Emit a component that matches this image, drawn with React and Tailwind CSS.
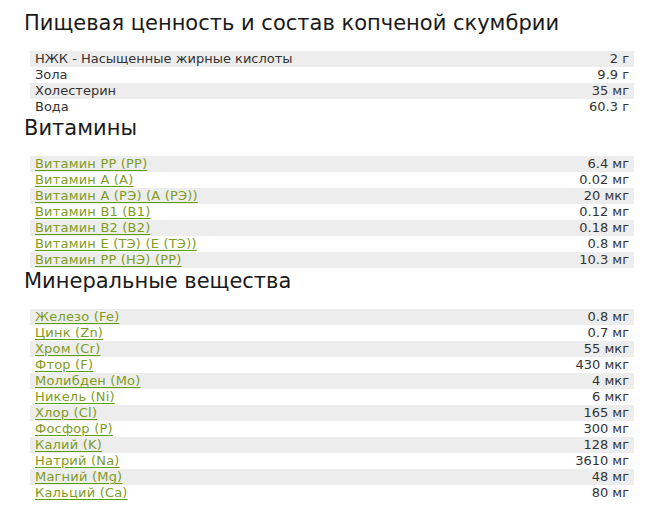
import React from "react";

const general = [
  ["НЖК - Насыщенные жирные кислоты", "2 г"],
  ["Зола", "9.9 г"],
  ["Холестерин", "35 мг"],
  ["Вода", "60.3 г"],
];

const vitamins = [
  ["Витамин PP (PP)", "6.4 мг"],
  ["Витамин A (A)", "0.02 мг"],
  ["Витамин A (РЭ) (A (РЭ))", "20 мкг"],
  ["Витамин B1 (B1)", "0.12 мг"],
  ["Витамин B2 (B2)", "0.18 мг"],
  ["Витамин E (ТЭ) (E (ТЭ))", "0.8 мг"],
  ["Витамин PP (НЭ) (PP)", "10.3 мг"],
];

const minerals = [
  ["Железо (Fe)", "0.8 мг"],
  ["Цинк (Zn)", "0.7 мг"],
  ["Хром (Cr)", "55 мкг"],
  ["Фтор (F)", "430 мкг"],
  ["Молибден (Mo)", "4 мкг"],
  ["Никель (Ni)", "6 мкг"],
  ["Хлор (Cl)", "165 мг"],
  ["Фосфор (P)", "300 мг"],
  ["Калий (K)", "128 мг"],
  ["Натрий (Na)", "3610 мг"],
  ["Магний (Mg)", "48 мг"],
  ["Кальций (Ca)", "80 мг"],
];

function Table({ rows, links }) {
  return (
    <div className="ml-[6px] w-[604px]">
      {rows.map(([name, val], i) => (
        <div
          key={name}
          className={`flex justify-between px-[5px] h-[16px] leading-[16px] text-[13px] ${
            i % 2 === 0 ? "bg-[#ededed]" : "bg-white"
          }`}
        >
          {links ? (
            <a className="text-[#7f9c1e] underline decoration-[#5e9e00] underline-offset-[2px] tracking-[0.2px]">
              {name}
            </a>
          ) : (
            <span className="text-[#333]">{name}</span>
          )}
          <span className="text-[#333]">{val}</span>
        </div>
      ))}
    </div>
  );
}

function H({ children }) {
  return (
    <h2 className="text-[21px] leading-[26px] text-[#1a1a1a] mb-[15px]">{children}</h2>
  );
}

export default function App() {
  return (
    <div
      className="pl-[24px] pt-[10px] bg-white min-h-[512px]"
      style={{ fontFamily: '"DejaVu Sans", Verdana, sans-serif' }}
    >
      <H>Пищевая ценность и состав копченой скумбрии</H>
      <Table rows={general} />
      <H>Витамины</H>
      <Table rows={vitamins} links />
      <H>Минеральные вещества</H>
      <Table rows={minerals} links />
    </div>
  );
}
